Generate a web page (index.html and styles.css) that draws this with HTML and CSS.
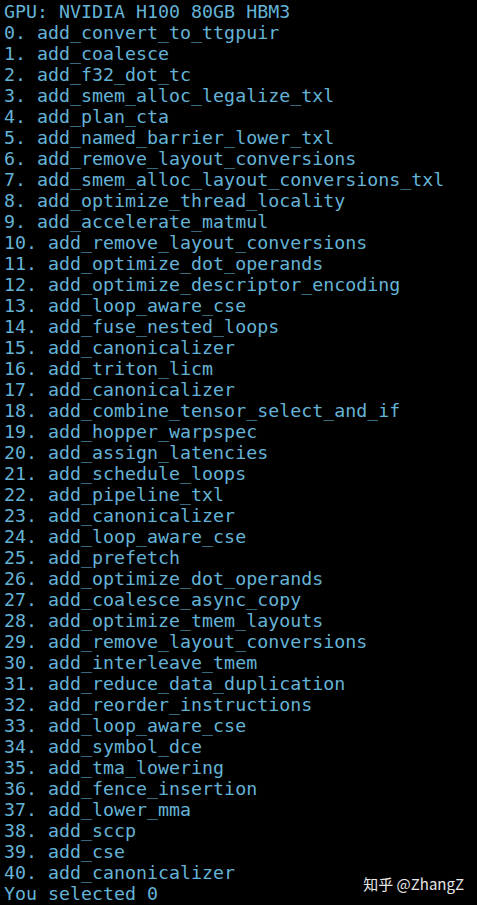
FILE: index.html
```html
<!DOCTYPE html>
<html>
<head>
<meta charset="utf-8">
<link rel="stylesheet" href="styles.css">
</head>
<body>
<div class="term">
<div class="line">GPU: NVIDIA H100 80GB HBM3</div>
<div class="line">0. add_convert_to_ttgpuir</div>
<div class="line">1. add_coalesce</div>
<div class="line">2. add_f32_dot_tc</div>
<div class="line">3. add_smem_alloc_legalize_txl</div>
<div class="line">4. add_plan_cta</div>
<div class="line">5. add_named_barrier_lower_txl</div>
<div class="line">6. add_remove_layout_conversions</div>
<div class="line">7. add_smem_alloc_layout_conversions_txl</div>
<div class="line">8. add_optimize_thread_locality</div>
<div class="line">9. add_accelerate_matmul</div>
<div class="line">10. add_remove_layout_conversions</div>
<div class="line">11. add_optimize_dot_operands</div>
<div class="line">12. add_optimize_descriptor_encoding</div>
<div class="line">13. add_loop_aware_cse</div>
<div class="line">14. add_fuse_nested_loops</div>
<div class="line">15. add_canonicalizer</div>
<div class="line">16. add_triton_licm</div>
<div class="line">17. add_canonicalizer</div>
<div class="line">18. add_combine_tensor_select_and_if</div>
<div class="line">19. add_hopper_warpspec</div>
<div class="line">20. add_assign_latencies</div>
<div class="line">21. add_schedule_loops</div>
<div class="line">22. add_pipeline_txl</div>
<div class="line">23. add_canonicalizer</div>
<div class="line">24. add_loop_aware_cse</div>
<div class="line">25. add_prefetch</div>
<div class="line">26. add_optimize_dot_operands</div>
<div class="line">27. add_coalesce_async_copy</div>
<div class="line">28. add_optimize_tmem_layouts</div>
<div class="line">29. add_remove_layout_conversions</div>
<div class="line">30. add_interleave_tmem</div>
<div class="line">31. add_reduce_data_duplication</div>
<div class="line">32. add_reorder_instructions</div>
<div class="line">33. add_loop_aware_cse</div>
<div class="line">34. add_symbol_dce</div>
<div class="line">35. add_tma_lowering</div>
<div class="line">36. add_fence_insertion</div>
<div class="line">37. add_lower_mma</div>
<div class="line">38. add_sccp</div>
<div class="line">39. add_cse</div>
<div class="line">40. add_canonicalizer</div>
<div class="line last"><span>You selected 0</span><span class="mark">知乎 @ZhangZ</span></div>
</div>
</body>
</html>
```
FILE: styles.css
```css
html, body {
  margin: 0;
  padding: 0;
  background: #000;
}
.term {
  width: 477px;
  height: 905px;
  box-sizing: border-box;
  padding: 1px 0 0 4px;
  background: #000;
  color: #64b3d6;
  font-family: "DejaVu Sans Mono", monospace;
  font-size: 18.3px;
  line-height: 21px;
  overflow: hidden;
}
.line {
  white-space: pre;
  height: 21px;
}
.line.last {
  display: flex;
  justify-content: space-between;
  align-items: baseline;
  padding-right: 13px;
}
.mark {
  position: relative;
  top: -10px;
  color: #e8e8e8;
  font-family: "Noto Sans CJK SC", "Noto Sans", sans-serif;
  font-size: 15px;
}
```
